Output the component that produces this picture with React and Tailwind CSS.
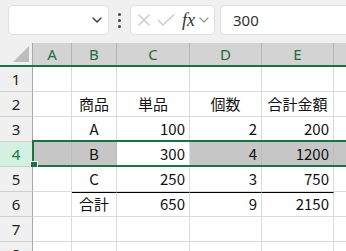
import React from "react";

function Chevron({ className = "" }) {
  return (
    <svg width="10" height="6" viewBox="0 0 10 6" className={className}>
      <path d="M1 1 L5 5 L9 1" fill="none" stroke="currentColor" strokeWidth="1.3" strokeLinecap="round" strokeLinejoin="round" />
    </svg>
  );
}

const widths = ["w-[39px]", "w-[45px]", "w-[73px]", "w-[72px]", "w-[72px]"];
const letters = ["A", "B", "C", "D", "E"];

const rows = [
  { n: 1, cells: ["", "", "", "", ""] },
  { n: 2, cells: ["", "商品", "単品", "個数", "合計金額"], center: true },
  { n: 3, cells: ["", "A", "100", "2", "200"] },
  { n: 4, cells: ["", "B", "300", "4", "1200"], selected: true },
  { n: 5, cells: ["", "C", "250", "3", "750"] },
  { n: 6, cells: ["", "合計", "650", "9", "2150"], topBlack: true },
  { n: 7, cells: ["", "", "", "", ""] },
  { n: 8, cells: ["", "", "", "", ""] },
];

export default function App() {
  return (
    <div
      className="w-[346px] h-[251px] overflow-hidden bg-white text-[#111]"
      style={{ fontFamily: '"Noto Sans", "Noto Sans CJK JP", sans-serif' }}
    >
      {/* toolbar */}
      <div className="h-[43px] bg-[#f0f0f0] flex items-start pt-[5px] pl-[8px]">
        <div className="w-[101px] h-[30px] bg-white border border-[#e0e0e0] rounded-[5px] flex items-center justify-end pr-[6px] text-[#333]">
          <Chevron />
        </div>
        <div className="w-[21px] h-[30px] flex flex-col items-center justify-center gap-[3px]">
          <span className="w-[3px] h-[3px] bg-[#444] rounded-full" />
          <span className="w-[3px] h-[3px] bg-[#444] rounded-full" />
          <span className="w-[3px] h-[3px] bg-[#444] rounded-full" />
        </div>
        <div className="w-[85px] h-[30px] bg-white border border-[#e0e0e0] rounded-[5px] flex items-center pl-[6px]">
          <svg width="14" height="14" viewBox="0 0 14 14" className="text-[#c4c4c4]">
            <path d="M1.5 1.5 L12.5 12.5 M12.5 1.5 L1.5 12.5" stroke="currentColor" strokeWidth="1.2" fill="none" />
          </svg>
          <svg width="18" height="14" viewBox="0 0 18 14" className="ml-[6px] text-[#c4c4c4]">
            <path d="M1 7 L6 12 L17 1.5" stroke="currentColor" strokeWidth="1.2" fill="none" />
          </svg>
          <span
            className="ml-[7px] text-[18px] italic leading-none text-[#333]"
            style={{ fontFamily: '"Liberation Serif", "DejaVu Serif", serif' }}
          >
            fx
          </span>
          <Chevron className="ml-[4px] text-[#999]" />
        </div>
        <div className="ml-[5px] flex-1 h-[30px] bg-white border border-[#e0e0e0] border-r-0 rounded-l-[5px] flex items-center pl-[12px] text-[15px] text-[#333]">
          300
        </div>
      </div>

      {/* header row */}
      <div className="flex h-[24px] border-b-2 border-[#1e7145]">
        <div className="w-[33px] bg-[#f0f0f0] border-r border-[#a8a8a8] relative">
          <div
            className="absolute right-[3px] bottom-[3px] w-0 h-0"
            style={{ borderBottom: "16px solid #bdbdbd", borderLeft: "16px solid transparent" }}
          />
        </div>
        {letters.map((l, i) => (
          <div
            key={l}
            className={`${widths[i]} bg-[#d3d3d3] border-r border-[#b4b4b4] flex items-center justify-center text-[15px] text-[#1e6b40]`}
          >
            {l}
          </div>
        ))}
        <div className="flex-1 bg-[#d3d3d3]" />
      </div>

      {/* rows */}
      {rows.map((r) => (
        <div key={r.n} className="flex h-[25px] relative">
          <div
            className={`w-[33px] border-r border-b border-[#a8a8a8] border-b-[#cfcfcf] flex items-center justify-center text-[15px] ${
              r.selected ? "bg-[#d3f0e0] text-[#107c41]" : "bg-[#f0f0f0] text-[#222]"
            }`}
          >
            {r.n}
          </div>
          {r.cells.map((c, i) => {
            const isNum = /^\d+$/.test(c);
            const gray = r.selected && i !== 2;
            const align = r.center || !isNum ? "justify-center" : "justify-end pr-[4px]";
            const top = r.topBlack && i >= 1 ? "border-t border-t-black" : "";
            return (
              <div
                key={i}
                className={`${widths[i]} ${top} border-r border-b ${gray ? "bg-[#c6c6c6] border-[#bcbcbc]" : "bg-white border-[#dadada]"} flex items-center ${align} text-[15px] text-[#111]`}
                style={{ fontFamily: '"Noto Sans CJK JP", sans-serif' }}
              >
                {c}
              </div>
            );
          })}
          <div className={`flex-1 border-b ${r.selected ? "bg-[#c6c6c6] border-[#bcbcbc]" : "bg-white border-[#dadada]"}`} />
          {r.selected && (
            <div className="absolute left-[32px] right-[-4px] top-[-2px] h-[27px] border-2 border-[#1e7145] pointer-events-none">
              <div className="absolute left-[-3px] bottom-[-3px] w-[6px] h-[6px] bg-[#1e7145] outline outline-1 outline-white" />
            </div>
          )}
        </div>
      ))}
    </div>
  );
}
